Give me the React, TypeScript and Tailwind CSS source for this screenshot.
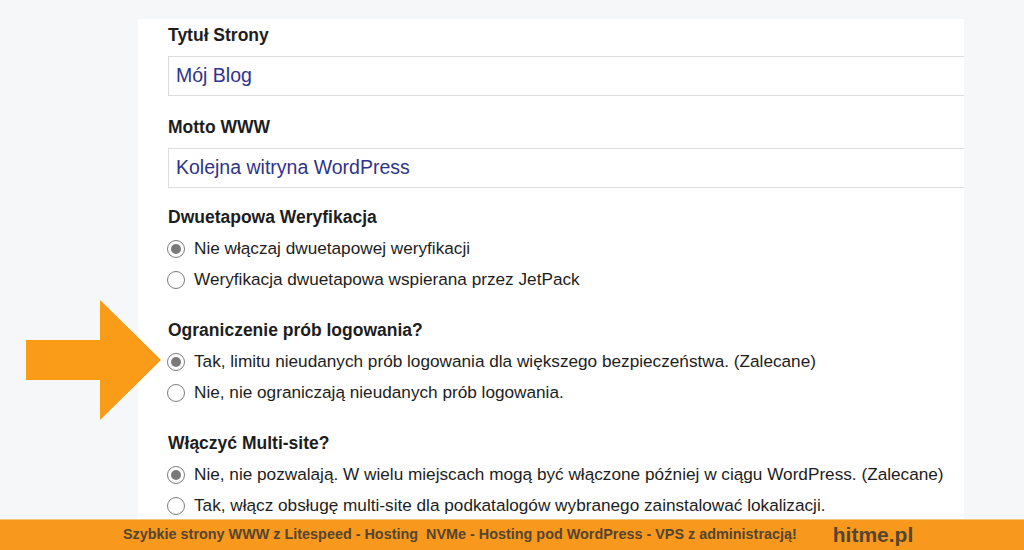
import React from "react";

type Opt = { label: string; checked?: boolean };

const sections: { title: string; name: string; options: Opt[] }[] = [
  {
    title: "Dwuetapowa Weryfikacja",
    name: "twofa",
    options: [
      { label: "Nie włączaj dwuetapowej weryfikacji", checked: true },
      { label: "Weryfikacja dwuetapowa wspierana przez JetPack" },
    ],
  },
  {
    title: "Ograniczenie prób logowania?",
    name: "limit",
    options: [
      {
        label:
          "Tak, limitu nieudanych prób logowania dla większego bezpieczeństwa. (Zalecane)",
        checked: true,
      },
      { label: "Nie, nie ograniczają nieudanych prób logowania." },
    ],
  },
  {
    title: "Włączyć Multi-site?",
    name: "multisite",
    options: [
      {
        label:
          "Nie, nie pozwalają. W wielu miejscach mogą być włączone później w ciągu WordPress. (Zalecane)",
        checked: true,
      },
      {
        label:
          "Tak, włącz obsługę multi-site dla podkatalogów wybranego zainstalować lokalizacji.",
      },
    ],
  },
];

function Radio({ checked }: { checked?: boolean }) {
  return (
    <span className="w-[18px] h-[18px] rounded-full border border-[#7c7c7c] bg-white flex items-center justify-center shrink-0">
      {checked && <span className="w-[10px] h-[10px] rounded-full bg-[#7a7a7a]" />}
    </span>
  );
}

function Arrow() {
  return (
    <svg
      className="absolute left-[26px] top-[300px]"
      width="136"
      height="122"
      viewBox="0 0 136 122"
    >
      <polygon
        points="0,40 74,40 74,0 135,60 74,120 74,80 0,80"
        fill="#fa9c17"
      />
    </svg>
  );
}

export default function App() {
  return (
    <div
      className="relative w-[1024px] h-[550px] overflow-hidden bg-[#f6f7f9] flex flex-col"
      style={{ fontFamily: '"Liberation Sans", Arial, sans-serif' }}
    >
      <div className="flex-1 overflow-hidden pt-[19px]">
        <div className="ml-[138px] w-[826px] bg-white pl-[30px] pt-[6px] pb-10 text-[#1d1d1d]">
          {/* tytuł */}
          <div className="text-[17.5px] font-bold leading-[20px]">Tytuł Strony</div>
          <div className="mt-[11px] h-[40px] border border-[#dcdcdc] border-r-0 flex items-center pl-[7px] text-[19.5px] text-[#30338a]">
            Mój Blog
          </div>

          <div className="mt-[21px] text-[17.5px] font-bold leading-[20px]">Motto WWW</div>
          <div className="mt-[11px] h-[40px] border border-[#dcdcdc] border-r-0 flex items-center pl-[7px] text-[19.5px] text-[#30338a]">
            Kolejna witryna WordPress
          </div>

          {sections.map((s, i) => (
            <div key={s.name} className={i === 0 ? "mt-[19px]" : "mt-[31px]"}>
              <div className="text-[17.5px] font-bold leading-[20px]">{s.title}</div>
              <div className="mt-[12px] flex flex-col gap-[12px]">
                {s.options.map((o) => (
                  <div key={o.label} className="flex items-center gap-[9px] text-[17.2px] leading-[19px] -ml-[1px]">
                    <Radio checked={o.checked} />
                    <span>{o.label}</span>
                  </div>
                ))}
              </div>
            </div>
          ))}
        </div>
      </div>

      <div className="h-[31px] bg-[#f8981d] flex items-center shrink-0 border-t border-[#f3c77a]">
        <span
          className="ml-[123px] text-[14.4px] font-bold text-[#55452e] whitespace-pre"
          style={{ fontFamily: '"Liberation Sans Narrow", "Arial Narrow", "Liberation Sans", sans-serif' }}
        >
          Szybkie strony WWW z Litespeed - Hosting  NVMe - Hosting pod WordPress - VPS z administracją!
        </span>
        <span
          className="ml-[36px] text-[21px] font-bold text-[#55452e]"
          style={{ fontFamily: '"Liberation Sans Narrow", "Arial Narrow", "Liberation Sans", sans-serif' }}
        >
          hitme.pl
        </span>
      </div>

      <Arrow />
    </div>
  );
}
